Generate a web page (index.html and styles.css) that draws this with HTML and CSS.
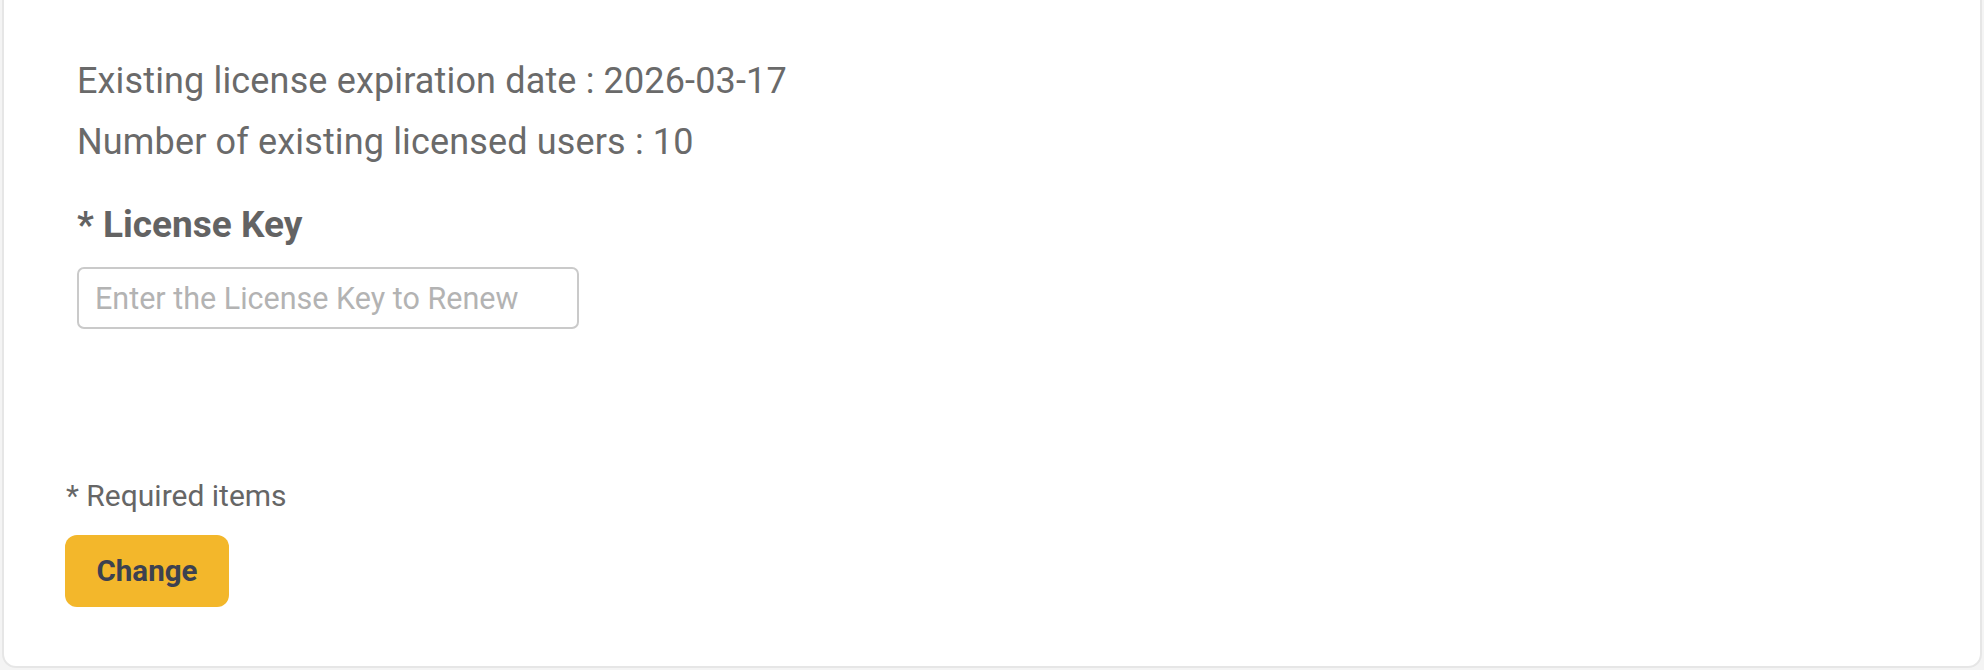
FILE: index.html
```html
<!DOCTYPE html>
<html lang="en">
<head>
<meta charset="utf-8">
<title>License</title>
<link rel="stylesheet" href="styles.css">
</head>
<body>
<div class="card">
  <div class="info">
    <p class="line">Existing license expiration date : 2026-03-17</p>
    <p class="line">Number of existing licensed users : 10</p>
    <label class="field-label" for="key">* License Key</label>
    <input id="key" class="field-input" type="text" placeholder="Enter the License Key to Renew">
  </div>
  <p class="required">* Required items</p>
  <button class="btn" type="button">Change</button>
</div>
</body>
</html>
```
FILE: styles.css
```css
html, body {
  margin: 0;
  padding: 0;
}
body {
  background: #f4f4f4;
  font-family: Roboto, "Liberation Sans", sans-serif;
  height: 670px;
  overflow: hidden;
}
.card {
  box-sizing: border-box;
  margin: -20px 2px 0 2px;
  height: 688px;
  background: #ffffff;
  border: 2px solid #e6e6e6;
  border-radius: 14px;
  padding: 69px 0 0 61px;
}
.info {
  padding-left: 12px;
  display: flex;
  flex-direction: column;
  align-items: flex-start;
}
.line {
  margin: 0;
  font-size: 36px;
  line-height: 61px;
  letter-spacing: 0.15px;
  color: #6a6a6a;
}
.field-label {
  margin-top: 30px;
  font-size: 37px;
  line-height: 44px;
  font-weight: 700;
  color: #636363;
}
.field-input {
  box-sizing: border-box;
  margin-top: 20px;
  width: 502px;
  height: 62px;
  border: 2px solid #cacaca;
  border-radius: 7px;
  padding: 0 16px;
  font-family: inherit;
  font-size: 30.5px;
  color: #555;
  outline: none;
}
.field-input::placeholder {
  color: #b3b3b3;
}
.required {
  margin: 149px 0 0 1px;
  font-size: 30px;
  line-height: 36px;
  color: #666666;
}
.btn {
  margin-top: 21px;
  width: 164px;
  height: 72px;
  border: none;
  border-radius: 12px;
  background: #f3b72b;
  color: #3c4150;
  font-family: inherit;
  font-size: 29.5px;
  font-weight: 700;
  cursor: pointer;
}
```
